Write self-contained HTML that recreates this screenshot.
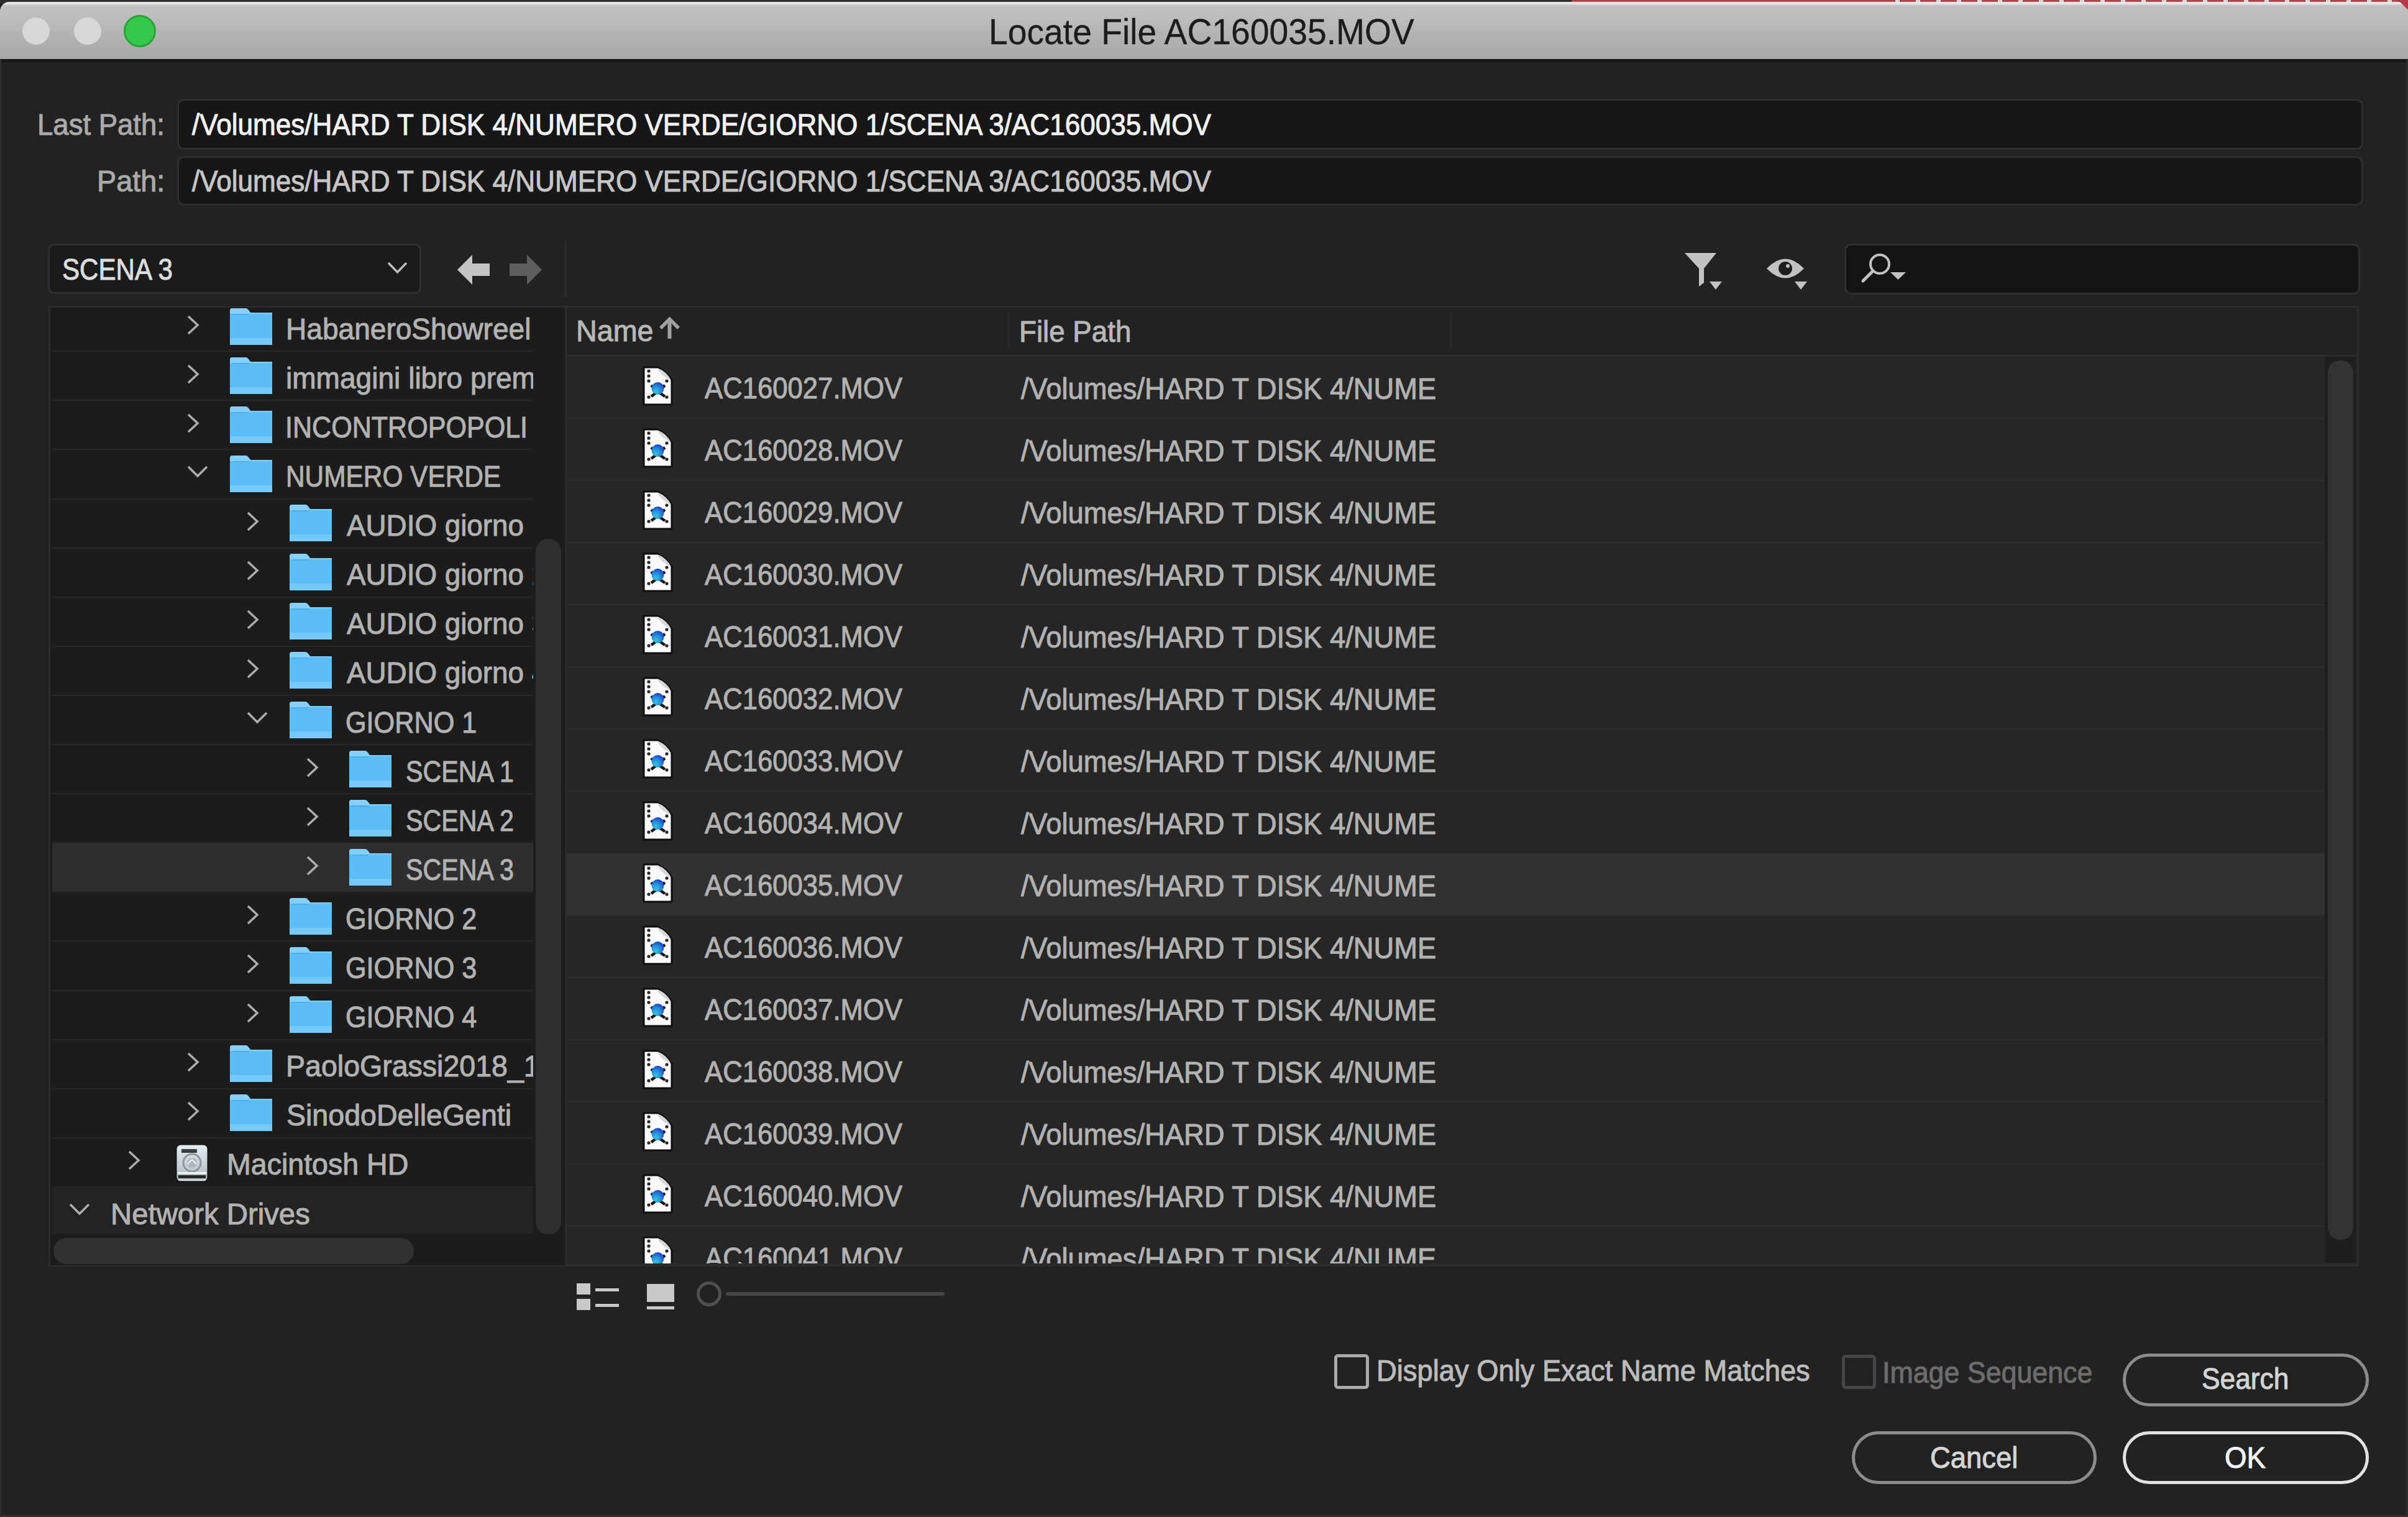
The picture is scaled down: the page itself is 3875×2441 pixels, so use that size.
<!DOCTYPE html>
<html><head><meta charset="utf-8"><title>Locate File</title><style>*{box-sizing:border-box;margin:0;padding:0}
html,body{width:3875px;height:2441px;overflow:hidden;background:#222;}
body{position:relative;font-family:"Liberation Sans",sans-serif;}
.a{position:absolute}
svg.a{display:block;overflow:visible}
.t{position:absolute;white-space:nowrap;transform-origin:0 0;-webkit-text-stroke:1px currentColor}
.inp{background:#171717;border:3px solid #2f2f2f;border-radius:11px}
</style></head><body>
<div class="a" style="left:0px;top:0px;width:3875px;height:6px;background:#2b2b2b"></div>
<div class="a" style="left:2529px;top:0;width:1331px;height:4px;background:repeating-linear-gradient(90deg,#a8474f 0 26px,#d8d8d8 26px 33px)"></div>
<div class="a" style="left:2529px;top:0px;width:501px;height:4px;background:#a8474f"></div>
<div class="a" style="left:0px;top:3px;width:3875px;height:93px;border-radius:15px 8px 0 0;background:linear-gradient(#e6e6e6 0,#e6e6e6 3px,#c2c2c2 6px,#b6b6b6 45px,#a6a6a6 93px)"></div>
<div class="a" style="left:0px;top:95px;width:3875px;height:5px;background:#181818"></div>
<svg class="a" style="left:3855px;top:0" width="20" height="20" viewBox="0 0 20 20"><path d="M4,0 L20,0 L20,16 Z" fill="#b03a44"/></svg>
<div class="a" style="left:36px;top:28px;width:44px;height:44px;border-radius:50%;background:#d7d7d7"></div>
<div class="a" style="left:119px;top:28px;width:44px;height:44px;border-radius:50%;background:#d7d7d7"></div>
<div class="a" style="left:199px;top:24px;width:52px;height:52px;border-radius:50%;background:#35c84a;border:3px solid #28a43a"></div>
<div class="a inp" style="left:285px;top:159px;width:3518px;height:82px"></div>
<div class="a inp" style="left:285px;top:251px;width:3518px;height:80px"></div>
<div class="a inp" style="left:77px;top:392px;width:601px;height:81px;background:#1a1a1a"></div>
<svg class="a" style="left:620px;top:418px" width="40" height="30" viewBox="0 0 40 30"><polyline points="5,5 19.5,20 34,5" fill="none" stroke="#bdbdbd" stroke-width="3.5"/></svg>
<svg class="a" style="left:730px;top:404px" width="64" height="60" viewBox="0 0 64 60"><path d="M6,30 L30,6 L30,20 L58,20 L58,40 L30,40 L30,54 Z" fill="#c4c4c4"/></svg>
<svg class="a" style="left:814px;top:404px" width="64" height="60" viewBox="0 0 64 60"><path d="M58,30 L34,6 L34,20 L6,20 L6,40 L34,40 L34,54 Z" fill="#5e5e5e"/></svg>
<div class="a" style="left:908px;top:387px;width:4px;height:91px;background:#2b2b2b"></div>
<svg class="a" style="left:2700px;top:400px" width="80" height="75" viewBox="0 0 80 75"><path d="M11,7 L62,7 L42,32 L42,55 L34,61 L34,32 Z" fill="#c2c2c2"/><path d="M51,53 L71,53 L61,66 Z" fill="#c2c2c2"/></svg>
<svg class="a" style="left:2840px;top:405px" width="80" height="70" viewBox="0 0 80 70"><path d="M3,27 Q33,-4 63,27 Q33,58 3,27 Z" fill="#c2c2c2"/><circle cx="33" cy="27" r="11" fill="#1f1f1f"/><circle cx="37" cy="23" r="3" fill="#c2c2c2"/><path d="M48,48 L68,48 L58,61 Z" fill="#c2c2c2"/></svg>
<div class="a inp" style="left:2968px;top:392px;width:830px;height:82px;background:#141414"></div>
<svg class="a" style="left:2990px;top:400px" width="90" height="60" viewBox="0 0 90 60"><circle cx="35" cy="25" r="15" fill="none" stroke="#c2c2c2" stroke-width="4"/><line x1="24" y1="36" x2="8" y2="52" stroke="#c2c2c2" stroke-width="5" stroke-linecap="round"/><path d="M52,38 L77,38 L64.5,50 Z" fill="#c2c2c2"/></svg>
<div class="a" style="left:78px;top:492px;width:831px;height:1547px;background:#1c1c1c;border:3px solid #2b2b2b;border-right:none"></div>
<div class="a" style="left:84px;top:495px;width:774px;height:1491px;overflow:hidden">
<div class="a" style="left:0;top:-7.9px;width:774px;height:77.1px;background:#1c1c1c"></div>
<div class="a" style="left:0;top:69.2px;width:774px;height:2px;background:#262626"></div>
<div class="a" style="left:0;top:71.2px;width:774px;height:77.1px;background:#1c1c1c"></div>
<div class="a" style="left:0;top:148.3px;width:774px;height:2px;background:#262626"></div>
<div class="a" style="left:0;top:150.3px;width:774px;height:77.1px;background:#1c1c1c"></div>
<div class="a" style="left:0;top:227.4px;width:774px;height:2px;background:#262626"></div>
<div class="a" style="left:0;top:229.4px;width:774px;height:77.1px;background:#1c1c1c"></div>
<div class="a" style="left:0;top:306.5px;width:774px;height:2px;background:#262626"></div>
<div class="a" style="left:0;top:308.5px;width:774px;height:77.1px;background:#1c1c1c"></div>
<div class="a" style="left:0;top:385.6px;width:774px;height:2px;background:#262626"></div>
<div class="a" style="left:0;top:387.6px;width:774px;height:77.1px;background:#1c1c1c"></div>
<div class="a" style="left:0;top:464.7px;width:774px;height:2px;background:#262626"></div>
<div class="a" style="left:0;top:466.7px;width:774px;height:77.1px;background:#1c1c1c"></div>
<div class="a" style="left:0;top:543.8px;width:774px;height:2px;background:#262626"></div>
<div class="a" style="left:0;top:545.8px;width:774px;height:77.1px;background:#1c1c1c"></div>
<div class="a" style="left:0;top:622.9px;width:774px;height:2px;background:#262626"></div>
<div class="a" style="left:0;top:624.9px;width:774px;height:77.1px;background:#1c1c1c"></div>
<div class="a" style="left:0;top:702.0px;width:774px;height:2px;background:#262626"></div>
<div class="a" style="left:0;top:704.0px;width:774px;height:77.1px;background:#1c1c1c"></div>
<div class="a" style="left:0;top:781.1px;width:774px;height:2px;background:#262626"></div>
<div class="a" style="left:0;top:783.1px;width:774px;height:77.1px;background:#1c1c1c"></div>
<div class="a" style="left:0;top:860.2px;width:774px;height:2px;background:#262626"></div>
<div class="a" style="left:0;top:862.2px;width:774px;height:77.1px;background:#2e2e2e"></div>
<div class="a" style="left:0;top:939.3px;width:774px;height:2px;background:#262626"></div>
<div class="a" style="left:0;top:941.3px;width:774px;height:77.1px;background:#1c1c1c"></div>
<div class="a" style="left:0;top:1018.4px;width:774px;height:2px;background:#262626"></div>
<div class="a" style="left:0;top:1020.4px;width:774px;height:77.1px;background:#1c1c1c"></div>
<div class="a" style="left:0;top:1097.5px;width:774px;height:2px;background:#262626"></div>
<div class="a" style="left:0;top:1099.5px;width:774px;height:77.1px;background:#1c1c1c"></div>
<div class="a" style="left:0;top:1176.6px;width:774px;height:2px;background:#262626"></div>
<div class="a" style="left:0;top:1178.6px;width:774px;height:77.1px;background:#1c1c1c"></div>
<div class="a" style="left:0;top:1255.7px;width:774px;height:2px;background:#262626"></div>
<div class="a" style="left:0;top:1257.7px;width:774px;height:77.1px;background:#1c1c1c"></div>
<div class="a" style="left:0;top:1334.8px;width:774px;height:2px;background:#262626"></div>
<div class="a" style="left:0;top:1336.8px;width:774px;height:77.1px;background:#1c1c1c"></div>
<div class="a" style="left:0;top:1413.9px;width:774px;height:2px;background:#262626"></div>
<div class="a" style="left:0;top:1415.9px;width:774px;height:77.1px;background:#232323"></div>
<div class="a" style="left:0;top:1493.0px;width:774px;height:2px;background:#262626"></div>
</div>
<svg class="a" style="left:299px;top:505.7px" width="24" height="34" viewBox="0 0 24 34"><polyline points="4,3 19,17 4,31" fill="none" stroke="#adadad" stroke-width="3.6"/></svg>
<svg class="a" style="left:370px;top:495.7px" width="68" height="59" viewBox="0 0 68 59"><path d="M0,4 Q0,0 4,0 L25,0 Q28,0 30,3 L33,7 L68,7 L68,59 L0,59 Z" fill="#5bbdf4"/><path d="M0,4 Q0,0 4,0 L25,0 Q28,0 30,3 L33,7 L68,7 L68,9 L0,9 Z" fill="#84d0fb"/><rect x="4" y="9" width="27" height="2" fill="#4eaee6"/><rect x="31" y="8" width="37" height="2" fill="#6cc6fa"/><rect x="0" y="48" width="68" height="11" fill="#76cafb"/></svg>
<svg class="a" style="left:299px;top:584.8px" width="24" height="34" viewBox="0 0 24 34"><polyline points="4,3 19,17 4,31" fill="none" stroke="#adadad" stroke-width="3.6"/></svg>
<svg class="a" style="left:370px;top:574.8px" width="68" height="59" viewBox="0 0 68 59"><path d="M0,4 Q0,0 4,0 L25,0 Q28,0 30,3 L33,7 L68,7 L68,59 L0,59 Z" fill="#5bbdf4"/><path d="M0,4 Q0,0 4,0 L25,0 Q28,0 30,3 L33,7 L68,7 L68,9 L0,9 Z" fill="#84d0fb"/><rect x="4" y="9" width="27" height="2" fill="#4eaee6"/><rect x="31" y="8" width="37" height="2" fill="#6cc6fa"/><rect x="0" y="48" width="68" height="11" fill="#76cafb"/></svg>
<svg class="a" style="left:299px;top:663.9px" width="24" height="34" viewBox="0 0 24 34"><polyline points="4,3 19,17 4,31" fill="none" stroke="#adadad" stroke-width="3.6"/></svg>
<svg class="a" style="left:370px;top:653.9px" width="68" height="59" viewBox="0 0 68 59"><path d="M0,4 Q0,0 4,0 L25,0 Q28,0 30,3 L33,7 L68,7 L68,59 L0,59 Z" fill="#5bbdf4"/><path d="M0,4 Q0,0 4,0 L25,0 Q28,0 30,3 L33,7 L68,7 L68,9 L0,9 Z" fill="#84d0fb"/><rect x="4" y="9" width="27" height="2" fill="#4eaee6"/><rect x="31" y="8" width="37" height="2" fill="#6cc6fa"/><rect x="0" y="48" width="68" height="11" fill="#76cafb"/></svg>
<svg class="a" style="left:301px;top:747.0px" width="34" height="24" viewBox="0 0 34 24"><polyline points="2,4 17,19 32,4" fill="none" stroke="#adadad" stroke-width="3.6"/></svg>
<svg class="a" style="left:370px;top:733.0px" width="68" height="59" viewBox="0 0 68 59"><path d="M0,4 Q0,0 4,0 L25,0 Q28,0 30,3 L33,7 L68,7 L68,59 L0,59 Z" fill="#5bbdf4"/><path d="M0,4 Q0,0 4,0 L25,0 Q28,0 30,3 L33,7 L68,7 L68,9 L0,9 Z" fill="#84d0fb"/><rect x="4" y="9" width="27" height="2" fill="#4eaee6"/><rect x="31" y="8" width="37" height="2" fill="#6cc6fa"/><rect x="0" y="48" width="68" height="11" fill="#76cafb"/></svg>
<svg class="a" style="left:395px;top:822.1px" width="24" height="34" viewBox="0 0 24 34"><polyline points="4,3 19,17 4,31" fill="none" stroke="#adadad" stroke-width="3.6"/></svg>
<svg class="a" style="left:466px;top:812.1px" width="68" height="59" viewBox="0 0 68 59"><path d="M0,4 Q0,0 4,0 L25,0 Q28,0 30,3 L33,7 L68,7 L68,59 L0,59 Z" fill="#5bbdf4"/><path d="M0,4 Q0,0 4,0 L25,0 Q28,0 30,3 L33,7 L68,7 L68,9 L0,9 Z" fill="#84d0fb"/><rect x="4" y="9" width="27" height="2" fill="#4eaee6"/><rect x="31" y="8" width="37" height="2" fill="#6cc6fa"/><rect x="0" y="48" width="68" height="11" fill="#76cafb"/></svg>
<svg class="a" style="left:395px;top:901.2px" width="24" height="34" viewBox="0 0 24 34"><polyline points="4,3 19,17 4,31" fill="none" stroke="#adadad" stroke-width="3.6"/></svg>
<svg class="a" style="left:466px;top:891.2px" width="68" height="59" viewBox="0 0 68 59"><path d="M0,4 Q0,0 4,0 L25,0 Q28,0 30,3 L33,7 L68,7 L68,59 L0,59 Z" fill="#5bbdf4"/><path d="M0,4 Q0,0 4,0 L25,0 Q28,0 30,3 L33,7 L68,7 L68,9 L0,9 Z" fill="#84d0fb"/><rect x="4" y="9" width="27" height="2" fill="#4eaee6"/><rect x="31" y="8" width="37" height="2" fill="#6cc6fa"/><rect x="0" y="48" width="68" height="11" fill="#76cafb"/></svg>
<svg class="a" style="left:395px;top:980.3px" width="24" height="34" viewBox="0 0 24 34"><polyline points="4,3 19,17 4,31" fill="none" stroke="#adadad" stroke-width="3.6"/></svg>
<svg class="a" style="left:466px;top:970.3px" width="68" height="59" viewBox="0 0 68 59"><path d="M0,4 Q0,0 4,0 L25,0 Q28,0 30,3 L33,7 L68,7 L68,59 L0,59 Z" fill="#5bbdf4"/><path d="M0,4 Q0,0 4,0 L25,0 Q28,0 30,3 L33,7 L68,7 L68,9 L0,9 Z" fill="#84d0fb"/><rect x="4" y="9" width="27" height="2" fill="#4eaee6"/><rect x="31" y="8" width="37" height="2" fill="#6cc6fa"/><rect x="0" y="48" width="68" height="11" fill="#76cafb"/></svg>
<svg class="a" style="left:395px;top:1059.4px" width="24" height="34" viewBox="0 0 24 34"><polyline points="4,3 19,17 4,31" fill="none" stroke="#adadad" stroke-width="3.6"/></svg>
<svg class="a" style="left:466px;top:1049.4px" width="68" height="59" viewBox="0 0 68 59"><path d="M0,4 Q0,0 4,0 L25,0 Q28,0 30,3 L33,7 L68,7 L68,59 L0,59 Z" fill="#5bbdf4"/><path d="M0,4 Q0,0 4,0 L25,0 Q28,0 30,3 L33,7 L68,7 L68,9 L0,9 Z" fill="#84d0fb"/><rect x="4" y="9" width="27" height="2" fill="#4eaee6"/><rect x="31" y="8" width="37" height="2" fill="#6cc6fa"/><rect x="0" y="48" width="68" height="11" fill="#76cafb"/></svg>
<svg class="a" style="left:397px;top:1142.5px" width="34" height="24" viewBox="0 0 34 24"><polyline points="2,4 17,19 32,4" fill="none" stroke="#adadad" stroke-width="3.6"/></svg>
<svg class="a" style="left:466px;top:1128.5px" width="68" height="59" viewBox="0 0 68 59"><path d="M0,4 Q0,0 4,0 L25,0 Q28,0 30,3 L33,7 L68,7 L68,59 L0,59 Z" fill="#5bbdf4"/><path d="M0,4 Q0,0 4,0 L25,0 Q28,0 30,3 L33,7 L68,7 L68,9 L0,9 Z" fill="#84d0fb"/><rect x="4" y="9" width="27" height="2" fill="#4eaee6"/><rect x="31" y="8" width="37" height="2" fill="#6cc6fa"/><rect x="0" y="48" width="68" height="11" fill="#76cafb"/></svg>
<svg class="a" style="left:491px;top:1217.6px" width="24" height="34" viewBox="0 0 24 34"><polyline points="4,3 19,17 4,31" fill="none" stroke="#adadad" stroke-width="3.6"/></svg>
<svg class="a" style="left:562px;top:1207.6px" width="68" height="59" viewBox="0 0 68 59"><path d="M0,4 Q0,0 4,0 L25,0 Q28,0 30,3 L33,7 L68,7 L68,59 L0,59 Z" fill="#5bbdf4"/><path d="M0,4 Q0,0 4,0 L25,0 Q28,0 30,3 L33,7 L68,7 L68,9 L0,9 Z" fill="#84d0fb"/><rect x="4" y="9" width="27" height="2" fill="#4eaee6"/><rect x="31" y="8" width="37" height="2" fill="#6cc6fa"/><rect x="0" y="48" width="68" height="11" fill="#76cafb"/></svg>
<svg class="a" style="left:491px;top:1296.7px" width="24" height="34" viewBox="0 0 24 34"><polyline points="4,3 19,17 4,31" fill="none" stroke="#adadad" stroke-width="3.6"/></svg>
<svg class="a" style="left:562px;top:1286.7px" width="68" height="59" viewBox="0 0 68 59"><path d="M0,4 Q0,0 4,0 L25,0 Q28,0 30,3 L33,7 L68,7 L68,59 L0,59 Z" fill="#5bbdf4"/><path d="M0,4 Q0,0 4,0 L25,0 Q28,0 30,3 L33,7 L68,7 L68,9 L0,9 Z" fill="#84d0fb"/><rect x="4" y="9" width="27" height="2" fill="#4eaee6"/><rect x="31" y="8" width="37" height="2" fill="#6cc6fa"/><rect x="0" y="48" width="68" height="11" fill="#76cafb"/></svg>
<svg class="a" style="left:491px;top:1375.8px" width="24" height="34" viewBox="0 0 24 34"><polyline points="4,3 19,17 4,31" fill="none" stroke="#adadad" stroke-width="3.6"/></svg>
<svg class="a" style="left:562px;top:1365.8px" width="68" height="59" viewBox="0 0 68 59"><path d="M0,4 Q0,0 4,0 L25,0 Q28,0 30,3 L33,7 L68,7 L68,59 L0,59 Z" fill="#5bbdf4"/><path d="M0,4 Q0,0 4,0 L25,0 Q28,0 30,3 L33,7 L68,7 L68,9 L0,9 Z" fill="#84d0fb"/><rect x="4" y="9" width="27" height="2" fill="#4eaee6"/><rect x="31" y="8" width="37" height="2" fill="#6cc6fa"/><rect x="0" y="48" width="68" height="11" fill="#76cafb"/></svg>
<svg class="a" style="left:395px;top:1454.9px" width="24" height="34" viewBox="0 0 24 34"><polyline points="4,3 19,17 4,31" fill="none" stroke="#adadad" stroke-width="3.6"/></svg>
<svg class="a" style="left:466px;top:1444.9px" width="68" height="59" viewBox="0 0 68 59"><path d="M0,4 Q0,0 4,0 L25,0 Q28,0 30,3 L33,7 L68,7 L68,59 L0,59 Z" fill="#5bbdf4"/><path d="M0,4 Q0,0 4,0 L25,0 Q28,0 30,3 L33,7 L68,7 L68,9 L0,9 Z" fill="#84d0fb"/><rect x="4" y="9" width="27" height="2" fill="#4eaee6"/><rect x="31" y="8" width="37" height="2" fill="#6cc6fa"/><rect x="0" y="48" width="68" height="11" fill="#76cafb"/></svg>
<svg class="a" style="left:395px;top:1534.0px" width="24" height="34" viewBox="0 0 24 34"><polyline points="4,3 19,17 4,31" fill="none" stroke="#adadad" stroke-width="3.6"/></svg>
<svg class="a" style="left:466px;top:1524.0px" width="68" height="59" viewBox="0 0 68 59"><path d="M0,4 Q0,0 4,0 L25,0 Q28,0 30,3 L33,7 L68,7 L68,59 L0,59 Z" fill="#5bbdf4"/><path d="M0,4 Q0,0 4,0 L25,0 Q28,0 30,3 L33,7 L68,7 L68,9 L0,9 Z" fill="#84d0fb"/><rect x="4" y="9" width="27" height="2" fill="#4eaee6"/><rect x="31" y="8" width="37" height="2" fill="#6cc6fa"/><rect x="0" y="48" width="68" height="11" fill="#76cafb"/></svg>
<svg class="a" style="left:395px;top:1613.1px" width="24" height="34" viewBox="0 0 24 34"><polyline points="4,3 19,17 4,31" fill="none" stroke="#adadad" stroke-width="3.6"/></svg>
<svg class="a" style="left:466px;top:1603.1px" width="68" height="59" viewBox="0 0 68 59"><path d="M0,4 Q0,0 4,0 L25,0 Q28,0 30,3 L33,7 L68,7 L68,59 L0,59 Z" fill="#5bbdf4"/><path d="M0,4 Q0,0 4,0 L25,0 Q28,0 30,3 L33,7 L68,7 L68,9 L0,9 Z" fill="#84d0fb"/><rect x="4" y="9" width="27" height="2" fill="#4eaee6"/><rect x="31" y="8" width="37" height="2" fill="#6cc6fa"/><rect x="0" y="48" width="68" height="11" fill="#76cafb"/></svg>
<svg class="a" style="left:299px;top:1692.2px" width="24" height="34" viewBox="0 0 24 34"><polyline points="4,3 19,17 4,31" fill="none" stroke="#adadad" stroke-width="3.6"/></svg>
<svg class="a" style="left:370px;top:1682.2px" width="68" height="59" viewBox="0 0 68 59"><path d="M0,4 Q0,0 4,0 L25,0 Q28,0 30,3 L33,7 L68,7 L68,59 L0,59 Z" fill="#5bbdf4"/><path d="M0,4 Q0,0 4,0 L25,0 Q28,0 30,3 L33,7 L68,7 L68,9 L0,9 Z" fill="#84d0fb"/><rect x="4" y="9" width="27" height="2" fill="#4eaee6"/><rect x="31" y="8" width="37" height="2" fill="#6cc6fa"/><rect x="0" y="48" width="68" height="11" fill="#76cafb"/></svg>
<svg class="a" style="left:299px;top:1771.3px" width="24" height="34" viewBox="0 0 24 34"><polyline points="4,3 19,17 4,31" fill="none" stroke="#adadad" stroke-width="3.6"/></svg>
<svg class="a" style="left:370px;top:1761.3px" width="68" height="59" viewBox="0 0 68 59"><path d="M0,4 Q0,0 4,0 L25,0 Q28,0 30,3 L33,7 L68,7 L68,59 L0,59 Z" fill="#5bbdf4"/><path d="M0,4 Q0,0 4,0 L25,0 Q28,0 30,3 L33,7 L68,7 L68,9 L0,9 Z" fill="#84d0fb"/><rect x="4" y="9" width="27" height="2" fill="#4eaee6"/><rect x="31" y="8" width="37" height="2" fill="#6cc6fa"/><rect x="0" y="48" width="68" height="11" fill="#76cafb"/></svg>
<svg class="a" style="left:204px;top:1850.4px" width="24" height="34" viewBox="0 0 24 34"><polyline points="4,3 19,17 4,31" fill="none" stroke="#adadad" stroke-width="3.6"/></svg>
<svg class="a" style="left:282px;top:1840.4px" width="54" height="63" viewBox="0 0 54 63"><defs><linearGradient id="hd" x1="0" y1="0" x2="0" y2="1"><stop offset="0" stop-color="#e2eef3"/><stop offset="0.7" stop-color="#bfc9cd"/><stop offset="1" stop-color="#9aa3a7"/></linearGradient></defs><rect x="1.5" y="1.5" width="51" height="60" rx="7" fill="url(#hd)" stroke="#151515" stroke-width="2"/><rect x="10" y="9" width="25" height="6" rx="1" fill="#3c3c3c"/><circle cx="27" cy="31" r="14" fill="none" stroke="#8f999d" stroke-width="3"/><circle cx="27" cy="31" r="8" fill="#aeb7bb"/><path d="M20,33 L27,26 L34,33" fill="none" stroke="#eef3f5" stroke-width="2"/><rect x="4" y="46" width="46" height="3" fill="#f2f6f7"/><rect x="5" y="51" width="44" height="5" fill="#262626"/><rect x="5" y="57" width="44" height="3" fill="#d0d6d8"/></svg>
<svg class="a" style="left:111px;top:1933.5px" width="34" height="24" viewBox="0 0 34 24"><polyline points="2,4 17,19 32,4" fill="none" stroke="#adadad" stroke-width="3.6"/></svg>
<div class="a" style="left:862px;top:867px;width:41px;height:1119px;background:#2f2f2f;border-radius:20px"></div>
<div class="a" style="left:84px;top:1986px;width:825px;height:50px;background:#1c1c1c"></div>
<div class="a" style="left:86px;top:1992px;width:580px;height:42px;background:#313131;border-radius:21px"></div>
<div class="a" style="left:909px;top:492px;width:2887px;height:1546px;background:#262626;border:3px solid #2c2c2c"></div>
<div class="a" style="left:912px;top:495px;width:2881px;height:76px;background:#222222"></div>
<div class="a" style="left:912px;top:571px;width:2881px;height:3px;background:#2c2c2c"></div>
<div class="a" style="left:1621px;top:505px;width:3px;height:56px;background:#2a2a2a"></div>
<div class="a" style="left:2333px;top:505px;width:3px;height:56px;background:#2a2a2a"></div>
<svg class="a" style="left:1058px;top:509px" width="40" height="40" viewBox="0 0 40 40"><polyline points="5,19 19.5,4.5 34,19" fill="none" stroke="#a2a2a2" stroke-width="5.5"/><line x1="19.5" y1="5" x2="19.5" y2="36" stroke="#a2a2a2" stroke-width="6"/></svg>
<div class="a" style="left:912px;top:574px;width:2829px;height:1459px;overflow:hidden">
<div class="a" style="left:0;top:0px;width:2829px;height:98px;background:#262626"></div>
<div class="a" style="left:0;top:98px;width:2829px;height:2px;background:#2c2c2c"></div>
<div class="a" style="left:0;top:100px;width:2829px;height:98px;background:#262626"></div>
<div class="a" style="left:0;top:198px;width:2829px;height:2px;background:#2c2c2c"></div>
<div class="a" style="left:0;top:200px;width:2829px;height:98px;background:#262626"></div>
<div class="a" style="left:0;top:298px;width:2829px;height:2px;background:#2c2c2c"></div>
<div class="a" style="left:0;top:300px;width:2829px;height:98px;background:#262626"></div>
<div class="a" style="left:0;top:398px;width:2829px;height:2px;background:#2c2c2c"></div>
<div class="a" style="left:0;top:400px;width:2829px;height:98px;background:#262626"></div>
<div class="a" style="left:0;top:498px;width:2829px;height:2px;background:#2c2c2c"></div>
<div class="a" style="left:0;top:500px;width:2829px;height:98px;background:#262626"></div>
<div class="a" style="left:0;top:598px;width:2829px;height:2px;background:#2c2c2c"></div>
<div class="a" style="left:0;top:600px;width:2829px;height:98px;background:#262626"></div>
<div class="a" style="left:0;top:698px;width:2829px;height:2px;background:#2c2c2c"></div>
<div class="a" style="left:0;top:700px;width:2829px;height:98px;background:#262626"></div>
<div class="a" style="left:0;top:798px;width:2829px;height:2px;background:#2c2c2c"></div>
<div class="a" style="left:0;top:800px;width:2829px;height:98px;background:#313131"></div>
<div class="a" style="left:0;top:898px;width:2829px;height:2px;background:#2c2c2c"></div>
<div class="a" style="left:0;top:900px;width:2829px;height:98px;background:#262626"></div>
<div class="a" style="left:0;top:998px;width:2829px;height:2px;background:#2c2c2c"></div>
<div class="a" style="left:0;top:1000px;width:2829px;height:98px;background:#262626"></div>
<div class="a" style="left:0;top:1098px;width:2829px;height:2px;background:#2c2c2c"></div>
<div class="a" style="left:0;top:1100px;width:2829px;height:98px;background:#262626"></div>
<div class="a" style="left:0;top:1198px;width:2829px;height:2px;background:#2c2c2c"></div>
<div class="a" style="left:0;top:1200px;width:2829px;height:98px;background:#262626"></div>
<div class="a" style="left:0;top:1298px;width:2829px;height:2px;background:#2c2c2c"></div>
<div class="a" style="left:0;top:1300px;width:2829px;height:98px;background:#262626"></div>
<div class="a" style="left:0;top:1398px;width:2829px;height:2px;background:#2c2c2c"></div>
<div class="a" style="left:0;top:1400px;width:2829px;height:98px;background:#262626"></div>
<div class="a" style="left:0;top:1498px;width:2829px;height:2px;background:#2c2c2c"></div>
</div>
<svg class="a" style="left:1033px;top:588px" width="52" height="66" viewBox="0 0 52 66"><path d="M3,3 L25,3 Q40,10 48,24 L48,63 L3,63 Z" fill="#fafafa" stroke="#0e0e0e" stroke-width="3" stroke-linejoin="round"/><path d="M25,4 Q29,16 47,24 Q40,10 25,4 Z" fill="#d8d8d8"/><g fill="#2a2a2a"><circle cx="11" cy="9" r="2.6"/><circle cx="11" cy="17" r="2.6"/><circle cx="11" cy="25" r="2.6"/><circle cx="11" cy="51" r="2.6"/><circle cx="40" cy="25" r="2.6"/><circle cx="40" cy="51" r="2.6"/></g><path d="M15,32 Q22,40 37,50 M15,50 Q28,40 37,32" stroke="#151515" stroke-width="4.5" fill="none"/><defs><radialGradient id="gl" cx="0.35" cy="0.75" r="0.8"><stop offset="0" stop-color="#35c4d6"/><stop offset="0.6" stop-color="#2280d8"/><stop offset="1" stop-color="#1a34cc"/></radialGradient></defs><circle cx="25.5" cy="37" r="10" fill="url(#gl)"/></svg>
<svg class="a" style="left:1033px;top:688px" width="52" height="66" viewBox="0 0 52 66"><path d="M3,3 L25,3 Q40,10 48,24 L48,63 L3,63 Z" fill="#fafafa" stroke="#0e0e0e" stroke-width="3" stroke-linejoin="round"/><path d="M25,4 Q29,16 47,24 Q40,10 25,4 Z" fill="#d8d8d8"/><g fill="#2a2a2a"><circle cx="11" cy="9" r="2.6"/><circle cx="11" cy="17" r="2.6"/><circle cx="11" cy="25" r="2.6"/><circle cx="11" cy="51" r="2.6"/><circle cx="40" cy="25" r="2.6"/><circle cx="40" cy="51" r="2.6"/></g><path d="M15,32 Q22,40 37,50 M15,50 Q28,40 37,32" stroke="#151515" stroke-width="4.5" fill="none"/><defs><radialGradient id="gl" cx="0.35" cy="0.75" r="0.8"><stop offset="0" stop-color="#35c4d6"/><stop offset="0.6" stop-color="#2280d8"/><stop offset="1" stop-color="#1a34cc"/></radialGradient></defs><circle cx="25.5" cy="37" r="10" fill="url(#gl)"/></svg>
<svg class="a" style="left:1033px;top:788px" width="52" height="66" viewBox="0 0 52 66"><path d="M3,3 L25,3 Q40,10 48,24 L48,63 L3,63 Z" fill="#fafafa" stroke="#0e0e0e" stroke-width="3" stroke-linejoin="round"/><path d="M25,4 Q29,16 47,24 Q40,10 25,4 Z" fill="#d8d8d8"/><g fill="#2a2a2a"><circle cx="11" cy="9" r="2.6"/><circle cx="11" cy="17" r="2.6"/><circle cx="11" cy="25" r="2.6"/><circle cx="11" cy="51" r="2.6"/><circle cx="40" cy="25" r="2.6"/><circle cx="40" cy="51" r="2.6"/></g><path d="M15,32 Q22,40 37,50 M15,50 Q28,40 37,32" stroke="#151515" stroke-width="4.5" fill="none"/><defs><radialGradient id="gl" cx="0.35" cy="0.75" r="0.8"><stop offset="0" stop-color="#35c4d6"/><stop offset="0.6" stop-color="#2280d8"/><stop offset="1" stop-color="#1a34cc"/></radialGradient></defs><circle cx="25.5" cy="37" r="10" fill="url(#gl)"/></svg>
<svg class="a" style="left:1033px;top:888px" width="52" height="66" viewBox="0 0 52 66"><path d="M3,3 L25,3 Q40,10 48,24 L48,63 L3,63 Z" fill="#fafafa" stroke="#0e0e0e" stroke-width="3" stroke-linejoin="round"/><path d="M25,4 Q29,16 47,24 Q40,10 25,4 Z" fill="#d8d8d8"/><g fill="#2a2a2a"><circle cx="11" cy="9" r="2.6"/><circle cx="11" cy="17" r="2.6"/><circle cx="11" cy="25" r="2.6"/><circle cx="11" cy="51" r="2.6"/><circle cx="40" cy="25" r="2.6"/><circle cx="40" cy="51" r="2.6"/></g><path d="M15,32 Q22,40 37,50 M15,50 Q28,40 37,32" stroke="#151515" stroke-width="4.5" fill="none"/><defs><radialGradient id="gl" cx="0.35" cy="0.75" r="0.8"><stop offset="0" stop-color="#35c4d6"/><stop offset="0.6" stop-color="#2280d8"/><stop offset="1" stop-color="#1a34cc"/></radialGradient></defs><circle cx="25.5" cy="37" r="10" fill="url(#gl)"/></svg>
<svg class="a" style="left:1033px;top:988px" width="52" height="66" viewBox="0 0 52 66"><path d="M3,3 L25,3 Q40,10 48,24 L48,63 L3,63 Z" fill="#fafafa" stroke="#0e0e0e" stroke-width="3" stroke-linejoin="round"/><path d="M25,4 Q29,16 47,24 Q40,10 25,4 Z" fill="#d8d8d8"/><g fill="#2a2a2a"><circle cx="11" cy="9" r="2.6"/><circle cx="11" cy="17" r="2.6"/><circle cx="11" cy="25" r="2.6"/><circle cx="11" cy="51" r="2.6"/><circle cx="40" cy="25" r="2.6"/><circle cx="40" cy="51" r="2.6"/></g><path d="M15,32 Q22,40 37,50 M15,50 Q28,40 37,32" stroke="#151515" stroke-width="4.5" fill="none"/><defs><radialGradient id="gl" cx="0.35" cy="0.75" r="0.8"><stop offset="0" stop-color="#35c4d6"/><stop offset="0.6" stop-color="#2280d8"/><stop offset="1" stop-color="#1a34cc"/></radialGradient></defs><circle cx="25.5" cy="37" r="10" fill="url(#gl)"/></svg>
<svg class="a" style="left:1033px;top:1088px" width="52" height="66" viewBox="0 0 52 66"><path d="M3,3 L25,3 Q40,10 48,24 L48,63 L3,63 Z" fill="#fafafa" stroke="#0e0e0e" stroke-width="3" stroke-linejoin="round"/><path d="M25,4 Q29,16 47,24 Q40,10 25,4 Z" fill="#d8d8d8"/><g fill="#2a2a2a"><circle cx="11" cy="9" r="2.6"/><circle cx="11" cy="17" r="2.6"/><circle cx="11" cy="25" r="2.6"/><circle cx="11" cy="51" r="2.6"/><circle cx="40" cy="25" r="2.6"/><circle cx="40" cy="51" r="2.6"/></g><path d="M15,32 Q22,40 37,50 M15,50 Q28,40 37,32" stroke="#151515" stroke-width="4.5" fill="none"/><defs><radialGradient id="gl" cx="0.35" cy="0.75" r="0.8"><stop offset="0" stop-color="#35c4d6"/><stop offset="0.6" stop-color="#2280d8"/><stop offset="1" stop-color="#1a34cc"/></radialGradient></defs><circle cx="25.5" cy="37" r="10" fill="url(#gl)"/></svg>
<svg class="a" style="left:1033px;top:1188px" width="52" height="66" viewBox="0 0 52 66"><path d="M3,3 L25,3 Q40,10 48,24 L48,63 L3,63 Z" fill="#fafafa" stroke="#0e0e0e" stroke-width="3" stroke-linejoin="round"/><path d="M25,4 Q29,16 47,24 Q40,10 25,4 Z" fill="#d8d8d8"/><g fill="#2a2a2a"><circle cx="11" cy="9" r="2.6"/><circle cx="11" cy="17" r="2.6"/><circle cx="11" cy="25" r="2.6"/><circle cx="11" cy="51" r="2.6"/><circle cx="40" cy="25" r="2.6"/><circle cx="40" cy="51" r="2.6"/></g><path d="M15,32 Q22,40 37,50 M15,50 Q28,40 37,32" stroke="#151515" stroke-width="4.5" fill="none"/><defs><radialGradient id="gl" cx="0.35" cy="0.75" r="0.8"><stop offset="0" stop-color="#35c4d6"/><stop offset="0.6" stop-color="#2280d8"/><stop offset="1" stop-color="#1a34cc"/></radialGradient></defs><circle cx="25.5" cy="37" r="10" fill="url(#gl)"/></svg>
<svg class="a" style="left:1033px;top:1288px" width="52" height="66" viewBox="0 0 52 66"><path d="M3,3 L25,3 Q40,10 48,24 L48,63 L3,63 Z" fill="#fafafa" stroke="#0e0e0e" stroke-width="3" stroke-linejoin="round"/><path d="M25,4 Q29,16 47,24 Q40,10 25,4 Z" fill="#d8d8d8"/><g fill="#2a2a2a"><circle cx="11" cy="9" r="2.6"/><circle cx="11" cy="17" r="2.6"/><circle cx="11" cy="25" r="2.6"/><circle cx="11" cy="51" r="2.6"/><circle cx="40" cy="25" r="2.6"/><circle cx="40" cy="51" r="2.6"/></g><path d="M15,32 Q22,40 37,50 M15,50 Q28,40 37,32" stroke="#151515" stroke-width="4.5" fill="none"/><defs><radialGradient id="gl" cx="0.35" cy="0.75" r="0.8"><stop offset="0" stop-color="#35c4d6"/><stop offset="0.6" stop-color="#2280d8"/><stop offset="1" stop-color="#1a34cc"/></radialGradient></defs><circle cx="25.5" cy="37" r="10" fill="url(#gl)"/></svg>
<svg class="a" style="left:1033px;top:1388px" width="52" height="66" viewBox="0 0 52 66"><path d="M3,3 L25,3 Q40,10 48,24 L48,63 L3,63 Z" fill="#fafafa" stroke="#0e0e0e" stroke-width="3" stroke-linejoin="round"/><path d="M25,4 Q29,16 47,24 Q40,10 25,4 Z" fill="#d8d8d8"/><g fill="#2a2a2a"><circle cx="11" cy="9" r="2.6"/><circle cx="11" cy="17" r="2.6"/><circle cx="11" cy="25" r="2.6"/><circle cx="11" cy="51" r="2.6"/><circle cx="40" cy="25" r="2.6"/><circle cx="40" cy="51" r="2.6"/></g><path d="M15,32 Q22,40 37,50 M15,50 Q28,40 37,32" stroke="#151515" stroke-width="4.5" fill="none"/><defs><radialGradient id="gl" cx="0.35" cy="0.75" r="0.8"><stop offset="0" stop-color="#35c4d6"/><stop offset="0.6" stop-color="#2280d8"/><stop offset="1" stop-color="#1a34cc"/></radialGradient></defs><circle cx="25.5" cy="37" r="10" fill="url(#gl)"/></svg>
<svg class="a" style="left:1033px;top:1488px" width="52" height="66" viewBox="0 0 52 66"><path d="M3,3 L25,3 Q40,10 48,24 L48,63 L3,63 Z" fill="#fafafa" stroke="#0e0e0e" stroke-width="3" stroke-linejoin="round"/><path d="M25,4 Q29,16 47,24 Q40,10 25,4 Z" fill="#d8d8d8"/><g fill="#2a2a2a"><circle cx="11" cy="9" r="2.6"/><circle cx="11" cy="17" r="2.6"/><circle cx="11" cy="25" r="2.6"/><circle cx="11" cy="51" r="2.6"/><circle cx="40" cy="25" r="2.6"/><circle cx="40" cy="51" r="2.6"/></g><path d="M15,32 Q22,40 37,50 M15,50 Q28,40 37,32" stroke="#151515" stroke-width="4.5" fill="none"/><defs><radialGradient id="gl" cx="0.35" cy="0.75" r="0.8"><stop offset="0" stop-color="#35c4d6"/><stop offset="0.6" stop-color="#2280d8"/><stop offset="1" stop-color="#1a34cc"/></radialGradient></defs><circle cx="25.5" cy="37" r="10" fill="url(#gl)"/></svg>
<svg class="a" style="left:1033px;top:1588px" width="52" height="66" viewBox="0 0 52 66"><path d="M3,3 L25,3 Q40,10 48,24 L48,63 L3,63 Z" fill="#fafafa" stroke="#0e0e0e" stroke-width="3" stroke-linejoin="round"/><path d="M25,4 Q29,16 47,24 Q40,10 25,4 Z" fill="#d8d8d8"/><g fill="#2a2a2a"><circle cx="11" cy="9" r="2.6"/><circle cx="11" cy="17" r="2.6"/><circle cx="11" cy="25" r="2.6"/><circle cx="11" cy="51" r="2.6"/><circle cx="40" cy="25" r="2.6"/><circle cx="40" cy="51" r="2.6"/></g><path d="M15,32 Q22,40 37,50 M15,50 Q28,40 37,32" stroke="#151515" stroke-width="4.5" fill="none"/><defs><radialGradient id="gl" cx="0.35" cy="0.75" r="0.8"><stop offset="0" stop-color="#35c4d6"/><stop offset="0.6" stop-color="#2280d8"/><stop offset="1" stop-color="#1a34cc"/></radialGradient></defs><circle cx="25.5" cy="37" r="10" fill="url(#gl)"/></svg>
<svg class="a" style="left:1033px;top:1688px" width="52" height="66" viewBox="0 0 52 66"><path d="M3,3 L25,3 Q40,10 48,24 L48,63 L3,63 Z" fill="#fafafa" stroke="#0e0e0e" stroke-width="3" stroke-linejoin="round"/><path d="M25,4 Q29,16 47,24 Q40,10 25,4 Z" fill="#d8d8d8"/><g fill="#2a2a2a"><circle cx="11" cy="9" r="2.6"/><circle cx="11" cy="17" r="2.6"/><circle cx="11" cy="25" r="2.6"/><circle cx="11" cy="51" r="2.6"/><circle cx="40" cy="25" r="2.6"/><circle cx="40" cy="51" r="2.6"/></g><path d="M15,32 Q22,40 37,50 M15,50 Q28,40 37,32" stroke="#151515" stroke-width="4.5" fill="none"/><defs><radialGradient id="gl" cx="0.35" cy="0.75" r="0.8"><stop offset="0" stop-color="#35c4d6"/><stop offset="0.6" stop-color="#2280d8"/><stop offset="1" stop-color="#1a34cc"/></radialGradient></defs><circle cx="25.5" cy="37" r="10" fill="url(#gl)"/></svg>
<svg class="a" style="left:1033px;top:1788px" width="52" height="66" viewBox="0 0 52 66"><path d="M3,3 L25,3 Q40,10 48,24 L48,63 L3,63 Z" fill="#fafafa" stroke="#0e0e0e" stroke-width="3" stroke-linejoin="round"/><path d="M25,4 Q29,16 47,24 Q40,10 25,4 Z" fill="#d8d8d8"/><g fill="#2a2a2a"><circle cx="11" cy="9" r="2.6"/><circle cx="11" cy="17" r="2.6"/><circle cx="11" cy="25" r="2.6"/><circle cx="11" cy="51" r="2.6"/><circle cx="40" cy="25" r="2.6"/><circle cx="40" cy="51" r="2.6"/></g><path d="M15,32 Q22,40 37,50 M15,50 Q28,40 37,32" stroke="#151515" stroke-width="4.5" fill="none"/><defs><radialGradient id="gl" cx="0.35" cy="0.75" r="0.8"><stop offset="0" stop-color="#35c4d6"/><stop offset="0.6" stop-color="#2280d8"/><stop offset="1" stop-color="#1a34cc"/></radialGradient></defs><circle cx="25.5" cy="37" r="10" fill="url(#gl)"/></svg>
<svg class="a" style="left:1033px;top:1888px" width="52" height="66" viewBox="0 0 52 66"><path d="M3,3 L25,3 Q40,10 48,24 L48,63 L3,63 Z" fill="#fafafa" stroke="#0e0e0e" stroke-width="3" stroke-linejoin="round"/><path d="M25,4 Q29,16 47,24 Q40,10 25,4 Z" fill="#d8d8d8"/><g fill="#2a2a2a"><circle cx="11" cy="9" r="2.6"/><circle cx="11" cy="17" r="2.6"/><circle cx="11" cy="25" r="2.6"/><circle cx="11" cy="51" r="2.6"/><circle cx="40" cy="25" r="2.6"/><circle cx="40" cy="51" r="2.6"/></g><path d="M15,32 Q22,40 37,50 M15,50 Q28,40 37,32" stroke="#151515" stroke-width="4.5" fill="none"/><defs><radialGradient id="gl" cx="0.35" cy="0.75" r="0.8"><stop offset="0" stop-color="#35c4d6"/><stop offset="0.6" stop-color="#2280d8"/><stop offset="1" stop-color="#1a34cc"/></radialGradient></defs><circle cx="25.5" cy="37" r="10" fill="url(#gl)"/></svg>
<svg class="a" style="left:1033px;top:1988px" width="52" height="66" viewBox="0 0 52 66"><path d="M3,3 L25,3 Q40,10 48,24 L48,63 L3,63 Z" fill="#fafafa" stroke="#0e0e0e" stroke-width="3" stroke-linejoin="round"/><path d="M25,4 Q29,16 47,24 Q40,10 25,4 Z" fill="#d8d8d8"/><g fill="#2a2a2a"><circle cx="11" cy="9" r="2.6"/><circle cx="11" cy="17" r="2.6"/><circle cx="11" cy="25" r="2.6"/><circle cx="11" cy="51" r="2.6"/><circle cx="40" cy="25" r="2.6"/><circle cx="40" cy="51" r="2.6"/></g><path d="M15,32 Q22,40 37,50 M15,50 Q28,40 37,32" stroke="#151515" stroke-width="4.5" fill="none"/><defs><radialGradient id="gl" cx="0.35" cy="0.75" r="0.8"><stop offset="0" stop-color="#35c4d6"/><stop offset="0.6" stop-color="#2280d8"/><stop offset="1" stop-color="#1a34cc"/></radialGradient></defs><circle cx="25.5" cy="37" r="10" fill="url(#gl)"/></svg>
<div class="a" style="left:909px;top:2033px;width:2887px;height:5px;background:#2c2c2c"></div>
<div class="a" style="left:0px;top:2038px;width:3872px;height:398px;background:#222222"></div>
<div class="a" style="left:3741px;top:574px;width:50px;height:1458px;background:#1e1e1e"></div>
<div class="a" style="left:3746px;top:580px;width:41px;height:1415px;background:#333333;border-radius:20px"></div>
<svg class="a" style="left:925px;top:2060px" width="80" height="55" viewBox="0 0 80 55"><rect x="3" y="5" width="22" height="18" fill="#c8c8c8"/><rect x="3" y="30" width="22" height="18" fill="#c8c8c8"/><rect x="33" y="13" width="38" height="5" fill="#c8c8c8"/><rect x="33" y="38" width="38" height="5" fill="#c8c8c8"/></svg>
<svg class="a" style="left:1038px;top:2060px" width="55" height="55" viewBox="0 0 55 55"><rect x="3" y="6" width="44" height="29" fill="#c8c8c8"/><rect x="3" y="42" width="44" height="5" fill="#c8c8c8"/></svg>
<svg class="a" style="left:1115px;top:2056px" width="410" height="52" viewBox="0 0 410 52"><circle cx="26" cy="26" r="17.5" fill="none" stroke="#505050" stroke-width="5"/><line x1="56" y1="26" x2="402" y2="26" stroke="#474747" stroke-width="6" stroke-linecap="round"/></svg>
<div class="a" style="left:2147px;top:2179px;width:56px;height:56px;border:5px solid #a9a9a9;border-radius:6px"></div>
<div class="a" style="left:2964px;top:2180px;width:55px;height:55px;border:5px solid #474747;border-radius:6px"></div>
<div class="a" style="left:3416px;top:2178px;width:396px;height:85px;border:5px solid #8c8c8c;border-radius:43px"></div>
<div class="a" style="left:2980px;top:2303px;width:394px;height:85px;border:5px solid #8c8c8c;border-radius:43px"></div>
<div class="a" style="left:3416px;top:2303px;width:396px;height:85px;border:5px solid #e2e2e2;border-radius:43px"></div>
<div class="a" style="left:0px;top:96px;width:2px;height:2345px;background:#303030"></div>
<div class="a" style="left:3872px;top:96px;width:3px;height:2345px;background:#2e2e2e"></div>
<div class="a" style="left:0px;top:2438px;width:3875px;height:3px;background:#303030"></div>
<div class="t" style="left:1591.12px;top:23.00px;font-size:57px;line-height:57px;color:#1c1c1c;transform:scaleX(0.9693);-webkit-text-stroke:0.3px #1c1c1c">Locate File AC160035.MOV</div>
<div class="t" style="left:60.16px;top:177.00px;font-size:48px;line-height:48px;color:#aaaaaa;transform:scaleX(0.9483)">Last Path:</div>
<div class="t" style="left:156.08px;top:268.00px;font-size:48px;line-height:48px;color:#aaaaaa;transform:scaleX(0.9738)">Path:</div>
<div class="t" style="left:309.00px;top:177.00px;font-size:48px;line-height:48px;color:#f2f2f2;transform:scaleX(0.9185)">/Volumes/HARD T DISK 4/NUMERO VERDE/GIORNO 1/SCENA 3/AC160035.MOV</div>
<div class="t" style="left:309.00px;top:268.00px;font-size:48px;line-height:48px;color:#c6c6c6;transform:scaleX(0.9185)">/Volumes/HARD T DISK 4/NUMERO VERDE/GIORNO 1/SCENA 3/AC160035.MOV</div>
<div class="t" style="left:100.25px;top:410.00px;font-size:48px;line-height:48px;color:#dcdcdc;transform:scaleX(0.8775)">SCENA 3</div>
<div class="a" style="left:0;top:485.70px;width:858px;height:88px;overflow:hidden"><div class="t" style="left:460.12px;top:20px;font-size:48px;line-height:48px;color:#b2b2b2;transform:scaleX(0.9599)">HabaneroShowreel</div></div>
<div class="a" style="left:0;top:564.80px;width:858px;height:88px;overflow:hidden"><div class="t" style="left:460.12px;top:20px;font-size:48px;line-height:48px;color:#b2b2b2;transform:scaleX(0.9599)">immagini libro premiati</div></div>
<div class="a" style="left:0;top:643.90px;width:858px;height:88px;overflow:hidden"><div class="t" style="left:459.41px;top:20px;font-size:48px;line-height:48px;color:#b2b2b2;transform:scaleX(0.8973)">INCONTROPOPOLI</div></div>
<div class="a" style="left:0;top:723.00px;width:858px;height:88px;overflow:hidden"><div class="t" style="left:460.35px;top:20px;font-size:48px;line-height:48px;color:#b2b2b2;transform:scaleX(0.8829)">NUMERO VERDE</div></div>
<div class="a" style="left:0;top:802.10px;width:858px;height:88px;overflow:hidden"><div class="t" style="left:557.80px;top:20px;font-size:48px;line-height:48px;color:#b2b2b2;transform:scaleX(0.9539)">AUDIO giorno 1</div></div>
<div class="a" style="left:0;top:881.20px;width:858px;height:88px;overflow:hidden"><div class="t" style="left:557.80px;top:20px;font-size:48px;line-height:48px;color:#b2b2b2;transform:scaleX(0.9539)">AUDIO giorno 2</div></div>
<div class="a" style="left:0;top:960.30px;width:858px;height:88px;overflow:hidden"><div class="t" style="left:557.80px;top:20px;font-size:48px;line-height:48px;color:#b2b2b2;transform:scaleX(0.9539)">AUDIO giorno 3</div></div>
<div class="a" style="left:0;top:1039.40px;width:858px;height:88px;overflow:hidden"><div class="t" style="left:557.80px;top:20px;font-size:48px;line-height:48px;color:#b2b2b2;transform:scaleX(0.9539)">AUDIO giorno 4</div></div>
<div class="a" style="left:0;top:1118.50px;width:858px;height:88px;overflow:hidden"><div class="t" style="left:556.00px;top:20px;font-size:48px;line-height:48px;color:#b2b2b2;transform:scaleX(0.9004)">GIORNO 1</div></div>
<div class="a" style="left:0;top:1197.60px;width:858px;height:88px;overflow:hidden"><div class="t" style="left:652.58px;top:20px;font-size:48px;line-height:48px;color:#b2b2b2;transform:scaleX(0.8577)">SCENA 1</div></div>
<div class="a" style="left:0;top:1276.70px;width:858px;height:88px;overflow:hidden"><div class="t" style="left:652.58px;top:20px;font-size:48px;line-height:48px;color:#b2b2b2;transform:scaleX(0.8577)">SCENA 2</div></div>
<div class="a" style="left:0;top:1355.80px;width:858px;height:88px;overflow:hidden"><div class="t" style="left:652.58px;top:20px;font-size:48px;line-height:48px;color:#b2b2b2;transform:scaleX(0.8577)">SCENA 3</div></div>
<div class="a" style="left:0;top:1434.90px;width:858px;height:88px;overflow:hidden"><div class="t" style="left:556.00px;top:20px;font-size:48px;line-height:48px;color:#b2b2b2;transform:scaleX(0.9004)">GIORNO 2</div></div>
<div class="a" style="left:0;top:1514.00px;width:858px;height:88px;overflow:hidden"><div class="t" style="left:556.00px;top:20px;font-size:48px;line-height:48px;color:#b2b2b2;transform:scaleX(0.9004)">GIORNO 3</div></div>
<div class="a" style="left:0;top:1593.10px;width:858px;height:88px;overflow:hidden"><div class="t" style="left:556.00px;top:20px;font-size:48px;line-height:48px;color:#b2b2b2;transform:scaleX(0.9004)">GIORNO 4</div></div>
<div class="a" style="left:0;top:1672.20px;width:858px;height:88px;overflow:hidden"><div class="t" style="left:460.09px;top:20px;font-size:48px;line-height:48px;color:#b2b2b2;transform:scaleX(0.9694)">PaoloGrassi2018_19</div></div>
<div class="a" style="left:0;top:1751.30px;width:858px;height:88px;overflow:hidden"><div class="t" style="left:461.06px;top:20px;font-size:48px;line-height:48px;color:#b2b2b2;transform:scaleX(0.9694)">SinodoDelleGenti</div></div>
<div class="a" style="left:0;top:1830.40px;width:858px;height:88px;overflow:hidden"><div class="t" style="left:365.09px;top:20px;font-size:48px;line-height:48px;color:#b2b2b2;transform:scaleX(0.9698)">Macintosh HD</div></div>
<div class="a" style="left:0;top:1909.50px;width:858px;height:88px;overflow:hidden"><div class="t" style="left:177.54px;top:20px;font-size:48px;line-height:48px;color:#b2b2b2;transform:scaleX(0.9861)">Network Drives</div></div>
<div class="t" style="left:927.08px;top:509.00px;font-size:48px;line-height:48px;color:#b8b8b8;transform:scaleX(0.9729)">Name</div>
<div class="t" style="left:1640.14px;top:510.00px;font-size:48px;line-height:48px;color:#b8b8b8;transform:scaleX(0.9525)">File Path</div>
<div class="t" style="left:1134.00px;top:601.00px;font-size:48px;line-height:48px;color:#b2b2b2;transform:scaleX(0.9099)">AC160027.MOV</div>
<div class="t" style="left:1643.00px;top:602.00px;font-size:48px;line-height:48px;color:#b2b2b2;transform:scaleX(0.9442)">/Volumes/HARD T DISK 4/NUME</div>
<div class="t" style="left:1134.00px;top:701.00px;font-size:48px;line-height:48px;color:#b2b2b2;transform:scaleX(0.9099)">AC160028.MOV</div>
<div class="t" style="left:1643.00px;top:702.00px;font-size:48px;line-height:48px;color:#b2b2b2;transform:scaleX(0.9442)">/Volumes/HARD T DISK 4/NUME</div>
<div class="t" style="left:1134.00px;top:801.00px;font-size:48px;line-height:48px;color:#b2b2b2;transform:scaleX(0.9099)">AC160029.MOV</div>
<div class="t" style="left:1643.00px;top:802.00px;font-size:48px;line-height:48px;color:#b2b2b2;transform:scaleX(0.9442)">/Volumes/HARD T DISK 4/NUME</div>
<div class="t" style="left:1134.00px;top:901.00px;font-size:48px;line-height:48px;color:#b2b2b2;transform:scaleX(0.9099)">AC160030.MOV</div>
<div class="t" style="left:1643.00px;top:902.00px;font-size:48px;line-height:48px;color:#b2b2b2;transform:scaleX(0.9442)">/Volumes/HARD T DISK 4/NUME</div>
<div class="t" style="left:1134.00px;top:1001.00px;font-size:48px;line-height:48px;color:#b2b2b2;transform:scaleX(0.9099)">AC160031.MOV</div>
<div class="t" style="left:1643.00px;top:1002.00px;font-size:48px;line-height:48px;color:#b2b2b2;transform:scaleX(0.9442)">/Volumes/HARD T DISK 4/NUME</div>
<div class="t" style="left:1134.00px;top:1101.00px;font-size:48px;line-height:48px;color:#b2b2b2;transform:scaleX(0.9099)">AC160032.MOV</div>
<div class="t" style="left:1643.00px;top:1102.00px;font-size:48px;line-height:48px;color:#b2b2b2;transform:scaleX(0.9442)">/Volumes/HARD T DISK 4/NUME</div>
<div class="t" style="left:1134.00px;top:1201.00px;font-size:48px;line-height:48px;color:#b2b2b2;transform:scaleX(0.9099)">AC160033.MOV</div>
<div class="t" style="left:1643.00px;top:1202.00px;font-size:48px;line-height:48px;color:#b2b2b2;transform:scaleX(0.9442)">/Volumes/HARD T DISK 4/NUME</div>
<div class="t" style="left:1134.00px;top:1301.00px;font-size:48px;line-height:48px;color:#b2b2b2;transform:scaleX(0.9099)">AC160034.MOV</div>
<div class="t" style="left:1643.00px;top:1302.00px;font-size:48px;line-height:48px;color:#b2b2b2;transform:scaleX(0.9442)">/Volumes/HARD T DISK 4/NUME</div>
<div class="t" style="left:1134.00px;top:1401.00px;font-size:48px;line-height:48px;color:#b2b2b2;transform:scaleX(0.9099)">AC160035.MOV</div>
<div class="t" style="left:1643.00px;top:1402.00px;font-size:48px;line-height:48px;color:#b2b2b2;transform:scaleX(0.9442)">/Volumes/HARD T DISK 4/NUME</div>
<div class="t" style="left:1134.00px;top:1501.00px;font-size:48px;line-height:48px;color:#b2b2b2;transform:scaleX(0.9099)">AC160036.MOV</div>
<div class="t" style="left:1643.00px;top:1502.00px;font-size:48px;line-height:48px;color:#b2b2b2;transform:scaleX(0.9442)">/Volumes/HARD T DISK 4/NUME</div>
<div class="t" style="left:1134.00px;top:1601.00px;font-size:48px;line-height:48px;color:#b2b2b2;transform:scaleX(0.9099)">AC160037.MOV</div>
<div class="t" style="left:1643.00px;top:1602.00px;font-size:48px;line-height:48px;color:#b2b2b2;transform:scaleX(0.9442)">/Volumes/HARD T DISK 4/NUME</div>
<div class="t" style="left:1134.00px;top:1701.00px;font-size:48px;line-height:48px;color:#b2b2b2;transform:scaleX(0.9099)">AC160038.MOV</div>
<div class="t" style="left:1643.00px;top:1702.00px;font-size:48px;line-height:48px;color:#b2b2b2;transform:scaleX(0.9442)">/Volumes/HARD T DISK 4/NUME</div>
<div class="t" style="left:1134.00px;top:1801.00px;font-size:48px;line-height:48px;color:#b2b2b2;transform:scaleX(0.9099)">AC160039.MOV</div>
<div class="t" style="left:1643.00px;top:1802.00px;font-size:48px;line-height:48px;color:#b2b2b2;transform:scaleX(0.9442)">/Volumes/HARD T DISK 4/NUME</div>
<div class="t" style="left:1134.00px;top:1901.00px;font-size:48px;line-height:48px;color:#b2b2b2;transform:scaleX(0.9099)">AC160040.MOV</div>
<div class="t" style="left:1643.00px;top:1902.00px;font-size:48px;line-height:48px;color:#b2b2b2;transform:scaleX(0.9442)">/Volumes/HARD T DISK 4/NUME</div>
<div class="a" style="left:0;top:1981.00px;width:3875px;height:52.00px;overflow:hidden"><div class="t" style="left:1134.00px;top:20px;font-size:48px;line-height:48px;color:#b2b2b2;transform:scaleX(0.9099)">AC160041.MOV</div></div>
<div class="a" style="left:0;top:1982.00px;width:3875px;height:51.00px;overflow:hidden"><div class="t" style="left:1643.00px;top:20px;font-size:48px;line-height:48px;color:#b2b2b2;transform:scaleX(0.9442)">/Volumes/HARD T DISK 4/NUME</div></div>
<div class="t" style="left:2215.17px;top:2182.00px;font-size:48px;line-height:48px;color:#bcbcbc;transform:scaleX(0.9443)">Display Only Exact Name Matches</div>
<div class="t" style="left:3029.27px;top:2185.00px;font-size:48px;line-height:48px;color:#6c6c6c;transform:scaleX(0.9322)">Image Sequence</div>
<div class="t" style="left:3543.15px;top:2195.00px;font-size:48px;line-height:48px;color:#d4d4d4;transform:scaleX(0.9227)">Search</div>
<div class="t" style="left:3106.11px;top:2322.00px;font-size:48px;line-height:48px;color:#d4d4d4;transform:scaleX(0.9465)">Cancel</div>
<div class="t" style="left:3580.10px;top:2322.00px;font-size:48px;line-height:48px;color:#f4f4f4;transform:scaleX(0.9505)">OK</div>
</body></html>
